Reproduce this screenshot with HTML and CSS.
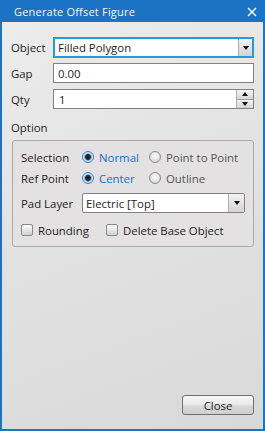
FILE: index.html
```html
<!DOCTYPE html>
<html>
<head>
<meta charset="utf-8">
<link rel="stylesheet" href="styles.css">
</head>
<body>
<div class="window">
  <div class="titlebar">
    <span class="title">Generate Offset Figure</span>
    <svg class="close-x" width="10" height="10" viewBox="0 0 10 10"><path d="M1 1 L9 9 M9 1 L1 9" stroke="#fff" stroke-width="1.4" fill="none"/></svg>
  </div>
  <div class="content">
    <div class="form">
      <label class="lbl r-obj">Object</label>
      <div class="combo active r-obj"><span class="val">Filled Polygon</span><span class="drop"><i class="tri-down"></i></span></div>
      <label class="lbl r-gap">Gap</label>
      <div class="input r-gap"><span class="val">0.00</span></div>
      <label class="lbl r-qty">Qty</label>
      <div class="input spin r-qty"><span class="val">1</span><span class="spinbtns"><span class="sb"><i class="tri-up"></i></span><span class="sb"><i class="tri-down"></i></span></span></div>
    </div>
    <div class="option-label">Option</div>
    <div class="group">
      <div class="grow first">
        <span class="glbl">Selection</span>
        <span class="radio on"></span><span class="rtext sel">Normal</span>
        <span class="radio"></span><span class="rtext">Point to Point</span>
      </div>
      <div class="grow">
        <span class="glbl">Ref Point</span>
        <span class="radio on"></span><span class="rtext sel">Center</span>
        <span class="radio"></span><span class="rtext">Outline</span>
      </div>
      <div class="grow pad">
        <span class="glbl">Pad Layer</span>
        <div class="combo small"><span class="val">Electric [Top]</span><span class="drop"><i class="tri-down"></i></span></div>
      </div>
      <div class="grow checks">
        <span class="check"></span><span class="ctext c1">Rounding</span>
        <span class="check"></span><span class="ctext">Delete Base Object</span>
      </div>
    </div>
    <div class="spacer"></div>
    <div class="footer">
      <button class="btn">Close</button>
    </div>
  </div>
</div>
</body>
</html>
```
FILE: styles.css
```css
* { box-sizing: border-box; }
html, body { margin: 0; padding: 0; }
body {
  width: 265px;
  height: 431px;
  overflow: hidden;
  font-family: "Open Sans", "DejaVu Sans", sans-serif;
  font-size: 11.4px;
  color: #1e1e1e;
}
.window {
  width: 265px;
  height: 431px;
  display: flex;
  flex-direction: column;
  background: #1a73c5;
}
.titlebar {
  height: 22px;
  flex: none;
  display: flex;
  align-items: center;
  padding: 0 0 0 14px;
  color: #fff;
}
.title { font-size: 11px; flex: 1; letter-spacing: 0.2px; padding-top: 1px; color: #f4f8fc; }
.close-x { margin-right: 8px; margin-top: 1px; }
.content {
  flex: 1;
  margin: 0 2px 2px 2px;
  background: linear-gradient(160deg, #ececec 0%, #e2e2e2 45%, #d9d9d9 100%);
  display: flex;
  flex-direction: column;
  padding: 15px 9px 7px 9px;
}
.form {
  display: grid;
  grid-template-columns: 42px 1fr;
  grid-template-rows: 21px 20px 20px;
  row-gap: 5px;
  align-items: center;
}
.form .r-qty { margin-top: 2px; }
.val { padding-left: 4px; flex: 1; white-space: nowrap; }
.combo, .input {
  height: 100%;
  display: flex;
  align-items: center;
  background: #fff;
  border: 1px solid #828282;
}
.input { height: 20px; }
.combo.active { border: 2px solid #1c9ee6; height: 21px; }
.combo.active .val { padding-left: 3px; }
.drop {
  width: 15px;
  align-self: stretch;
  background: linear-gradient(#f2f2f2, #d4d4d4);
  border-left: 1px solid #b0b0b0;
  display: flex;
  align-items: center;
  justify-content: center;
}
.combo.active .drop { width: 14px; }
.tri-down {
  width: 0; height: 0;
  border-left: 3px solid transparent;
  border-right: 3px solid transparent;
  border-top: 4px solid #111;
}
.tri-up {
  width: 0; height: 0;
  border-left: 3px solid transparent;
  border-right: 3px solid transparent;
  border-bottom: 4px solid #111;
}
.spin .val { padding-left: 5px; }
.spinbtns {
  width: 17px;
  align-self: stretch;
  display: flex;
  flex-direction: column;
  border-left: 1px solid #b0b0b0;
}
.sb {
  flex: 1;
  display: flex;
  align-items: center;
  justify-content: center;
  background: linear-gradient(#f4f4f4, #d6d6d6);
}
.sb + .sb { border-top: 1px solid #a0a0a0; }
.option-label { margin-top: 12px; height: 16px; line-height: 16px; }
.group {
  margin: 4px 0 0 1px;
  height: 107px;
  flex: none;
  border: 1px solid #a9a9a9;
  border-radius: 3px;
  background: #e3e1e1;
  padding: 7px 8px 0 8px;
  display: flex;
  flex-direction: column;
}
.grow {
  display: flex;
  align-items: center;
  height: 18px;
  margin-top: 3px;
  white-space: nowrap;
}
.grow.first { margin-top: 0; }
.glbl { width: 61px; flex: none; }
.radio {
  width: 12px; height: 12px;
  border-radius: 50%;
  border: 1px solid #8d8d8d;
  background: radial-gradient(circle at 50% 40%, #fbfbfb 0%, #e0e0e0 60%, #c9c9c9 100%);
  flex: none;
  margin-right: 5px;
}
.radio.on {
  border-color: #3d7ec2;
  background: radial-gradient(circle, #1f1f1f 0, #2a2a2a 2.6px, #6fb2e6 3.2px, #c6e2f6 4.4px, #eaf4fb 5.5px);
}
.rtext { color: #555; flex: none; }
.rtext.sel { color: #1b6ec1; width: 50px; }
.grow.pad { height: 20px; margin-top: 6px; }
.combo.small { width: 163px; height: 20px; border-radius: 2px; }
.combo.small .val { padding-left: 3px; }
.combo.small .drop { width: 16px; border-radius: 0 2px 2px 0; }
.grow.checks { margin-top: 8px; }
.check {
  width: 12px; height: 12px;
  border: 1px solid #8a8a8a;
  border-radius: 2px;
  background: linear-gradient(#fdfdfd, #d0d0d0);
  flex: none;
  margin-right: 5px;
}
.ctext.c1 { width: 68px; flex: none; }
.spacer { flex: 1; }
.footer { display: flex; justify-content: flex-end; }
.btn {
  width: 72px;
  height: 20px;
  border: 1px solid #707070;
  border-radius: 3px;
  background: linear-gradient(#f6f6f6 0%, #ebebeb 45%, #d9d9d9 55%, #cfcfcf 100%);
  font-family: "Open Sans", "DejaVu Sans", sans-serif;
  font-size: 11.4px;
  color: #1e1e1e;
  padding: 0;
  margin-bottom: 7px;
}
```
